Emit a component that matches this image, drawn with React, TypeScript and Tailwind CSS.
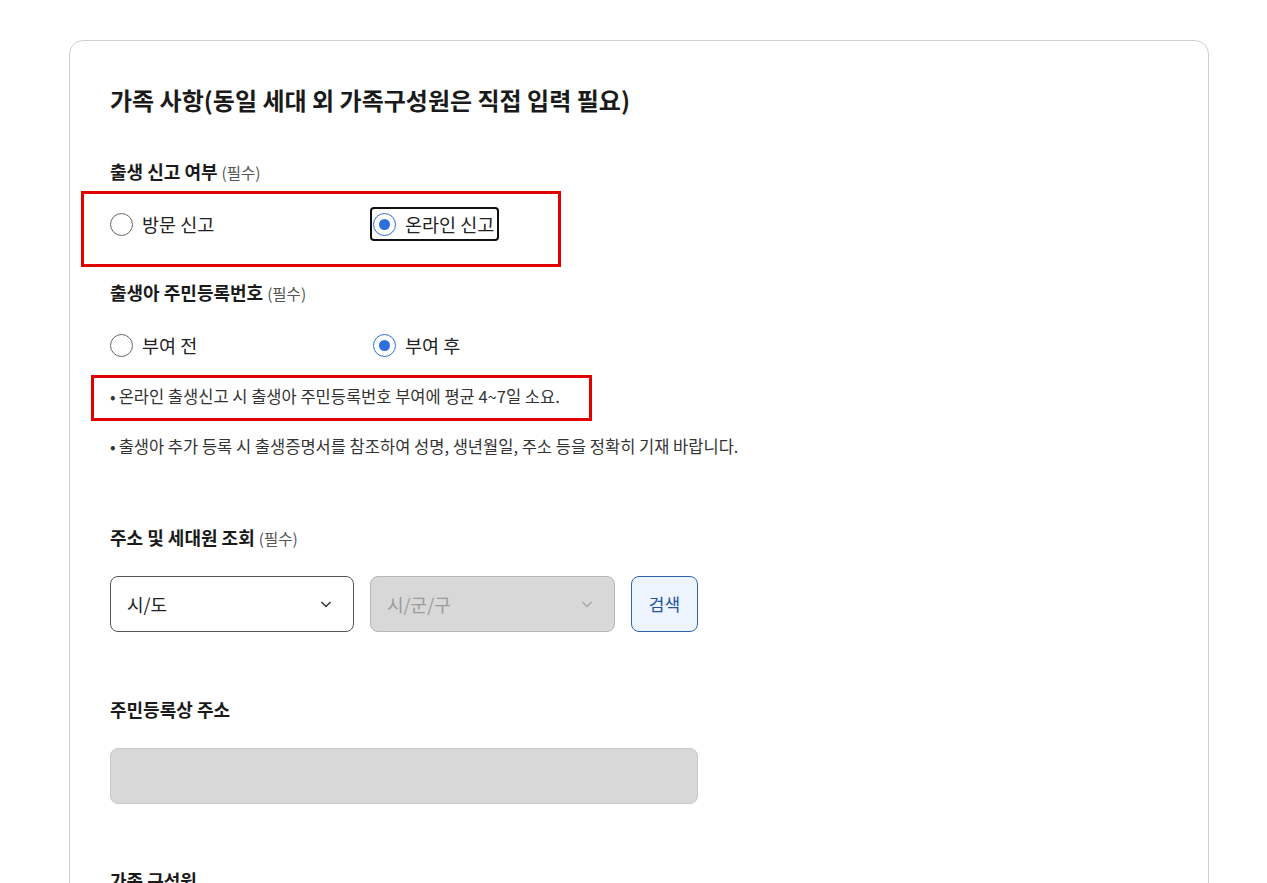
import React from "react";

const font = { fontFamily: '"Noto Sans CJK KR", "Noto Sans", sans-serif' };

function Radio({ label, checked, focused }: { label: string; checked?: boolean; focused?: boolean }) {
    return (
        <div
            className={
                "flex items-center gap-[9px] h-[34px] " +
                (focused ? "border-2 border-[#111] rounded-[4px] -ml-[3px] pl-[1px] pr-[3px]" : "")
            }
        >
            <span
                className={
                    "flex items-center justify-center w-[23px] h-[23px] rounded-full bg-white border " +
                    (checked ? "border-[#2f6fdc]" : "border-[#666]")
                }
            >
                {checked && <span className="w-[11px] h-[11px] rounded-full bg-[#2f6fdc]" />}
            </span>
            <span className="text-[18.5px] text-[#222] leading-[24px]">{label}</span>
        </div>
    );
}

function Label({ text, required }: { text: string; required?: boolean }) {
    return (
        <div className="h-[24px] leading-[24px] flex items-baseline gap-[4px]">
            <span className="text-[18px] font-bold text-[#1a1a1a]">{text}</span>
            {required && <span className="text-[15.5px] text-[#555]">(필수)</span>}
        </div>
    );
}

function Note({ text }: { text: string }) {
    return (
        <>
            <span className="mr-[3px]">•</span>
            {text}
        </>
    );
}

function Chevron({ color }: { color: string }) {
    return (
        <svg width="14" height="14" viewBox="0 0 14 14" fill="none">
            <path d="M2.5 5L7 9.5L11.5 5" stroke={color} strokeWidth="1.5" />
        </svg>
    );
}

export default function App() {
    return (
        <div className="min-h-[883px] bg-white pt-[40px]" style={font}>
            <div className="ml-[69px] w-[1140px] h-[900px] border border-[#cfcfcf] rounded-[14px] pl-[40px] pt-[43px]">
                <div className="text-[24px] font-bold leading-[32px] text-[#1a1a1a]">
                    가족 사항(동일 세대 외 가족구성원은 직접 입력 필요)
                </div>

                <div className="mt-[43px]">
                    <Label text="출생 신고 여부" required />
                </div>
                <div className="relative mt-[21px] h-[40px] flex items-center">
                    <div className="w-[263px]">
                        <Radio label="방문 신고" />
                    </div>
                    <Radio label="온라인 신고" checked focused />
                    <div className="absolute -left-[29px] -top-[13px] w-[480px] h-[76px] border-[3px] border-[#e00000] pointer-events-none" />
                </div>

                <div className="mt-[36px]">
                    <Label text="출생아 주민등록번호" required />
                </div>
                <div className="mt-[21px] h-[40px] flex items-center">
                    <div className="w-[263px]">
                        <Radio label="부여 전" />
                    </div>
                    <Radio label="부여 후" checked />
                </div>

                <div className="relative mt-[19px] h-[24px] leading-[24px] text-[16.5px] text-[#333]">
                    <Note text="온라인 출생신고 시 출생아 주민등록번호 부여에 평균 4~7일 소요." />
                    <div className="absolute -left-[19px] -top-[9px] w-[501px] h-[46px] border-[3px] border-[#e00000] pointer-events-none" />
                </div>
                <div className="mt-[26px] h-[24px] leading-[24px] text-[16.5px] text-[#333]">
                    <Note text="출생아 추가 등록 시 출생증명서를 참조하여 성명, 생년월일, 주소 등을 정확히 기재 바랍니다." />
                </div>

                <div className="mt-[67px]">
                    <Label text="주소 및 세대원 조회" required />
                </div>
                <div className="mt-[27px] flex gap-[16px]">
                    <div className="w-[244px] h-[56px] rounded-[8px] border border-[#555] bg-white flex items-center justify-between pl-[16px] pr-[20px]">
                        <span className="text-[18px] text-[#222]">시/도</span>
                        <Chevron color="#333" />
                    </div>
                    <div className="w-[245px] h-[56px] rounded-[8px] border border-[#b5b5b5] bg-[#d8d8d8] flex items-center justify-between pl-[16px] pr-[20px]">
                        <span className="text-[18px] text-[#9c9c9c]">시/군/구</span>
                        <Chevron color="#a8a8a8" />
                    </div>
                    <button className="w-[67px] h-[56px] rounded-[8px] border border-[#2f62b3] bg-[#eef4fd] text-[17px] text-[#24519e]">
                        검색
                    </button>
                </div>

                <div className="mt-[65px]">
                    <Label text="주민등록상 주소" />
                </div>
                <div className="mt-[27px] w-[588px] h-[56px] rounded-[8px] border border-[#c8c8c8] bg-[#d8d8d8]" />

                <div className="mt-[64px]">
                    <Label text="가족 구성원" />
                </div>
            </div>
        </div>
    );
}
